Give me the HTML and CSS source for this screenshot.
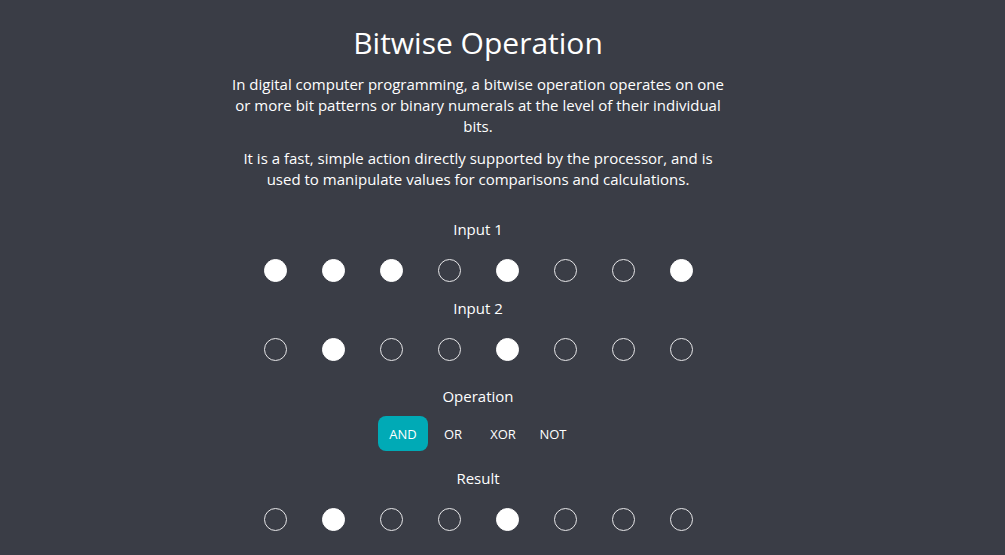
FILE: index.html
```html
<!DOCTYPE html>
<html>
<head>
<meta charset="utf-8">
<link rel="stylesheet" href="styles.css">
</head>
<body>
<main class="page">
  <h1 class="title">Bitwise Operation</h1>
  <p class="intro">In digital computer programming, a bitwise operation operates on one or more bit patterns or binary numerals at the level of their individual bits.</p>
  <p class="intro">It is a fast, simple action directly supported by the processor, and is used to manipulate values for comparisons and calculations.</p>

  <section class="group">
    <div class="label">Input 1</div>
    <div class="bits">
      <span class="bit on"></span><span class="bit on"></span><span class="bit on"></span><span class="bit"></span><span class="bit on"></span><span class="bit"></span><span class="bit"></span><span class="bit on"></span>
    </div>
  </section>

  <section class="group">
    <div class="label">Input 2</div>
    <div class="bits">
      <span class="bit"></span><span class="bit on"></span><span class="bit"></span><span class="bit"></span><span class="bit on"></span><span class="bit"></span><span class="bit"></span><span class="bit"></span>
    </div>
  </section>

  <section class="group ops-group">
    <div class="label">Operation</div>
    <div class="ops">
      <button class="op active">AND</button><button class="op">OR</button><button class="op">XOR</button><button class="op">NOT</button>
    </div>
  </section>

  <section class="group result-group">
    <div class="label">Result</div>
    <div class="bits">
      <span class="bit"></span><span class="bit on"></span><span class="bit"></span><span class="bit"></span><span class="bit on"></span><span class="bit"></span><span class="bit"></span><span class="bit"></span>
    </div>
  </section>
</main>
</body>
</html>
```
FILE: styles.css
```css
html, body {
  margin: 0;
  padding: 0;
  background: #3a3d46;
}
body {
  color: #ffffff;
  font-family: "Open Sans", "Noto Sans", sans-serif;
  height: 555px;
  overflow: hidden;
}
.page {
  width: 956px;
  display: flex;
  flex-direction: column;
  align-items: center;
  padding-top: 23px;
}
.title {
  margin: 0;
  font-size: 30px;
  font-weight: 400;
  line-height: 40px;
}
.intro {
  width: 500px;
  margin: 11px 0 0;
  text-align: center;
  font-size: 15px;
  line-height: 21px;
}
.intro + .intro {
  margin-top: 11px;
}
.group {
  display: flex;
  flex-direction: column;
  align-items: center;
  margin-top: 29px;
}
.group + .group {
  margin-top: 16px;
}
.label {
  font-size: 15px;
  line-height: 20px;
}
.bits {
  display: flex;
  margin-top: 20px;
}
.bit {
  width: 23px;
  height: 23px;
  box-sizing: border-box;
  border: 1.5px solid #e6e6e8;
  border-radius: 50%;
  margin: 0 17.5px;
}
.bit.on {
  background: #ffffff;
  border-color: #ffffff;
}
.group.ops-group {
  margin-top: 25px;
}
.ops {
  display: flex;
  margin-top: 10px;
}
.op {
  width: 50px;
  height: 35px;
  border: none;
  background: transparent;
  color: #ffffff;
  font-family: "Open Sans", "Noto Sans", sans-serif;
  font-size: 13px;
  font-weight: 500;
  border-radius: 8px;
  padding: 0;
}
.op.active {
  background: #00aab6;
}
.group.result-group {
  margin-top: 17px;
}
```
